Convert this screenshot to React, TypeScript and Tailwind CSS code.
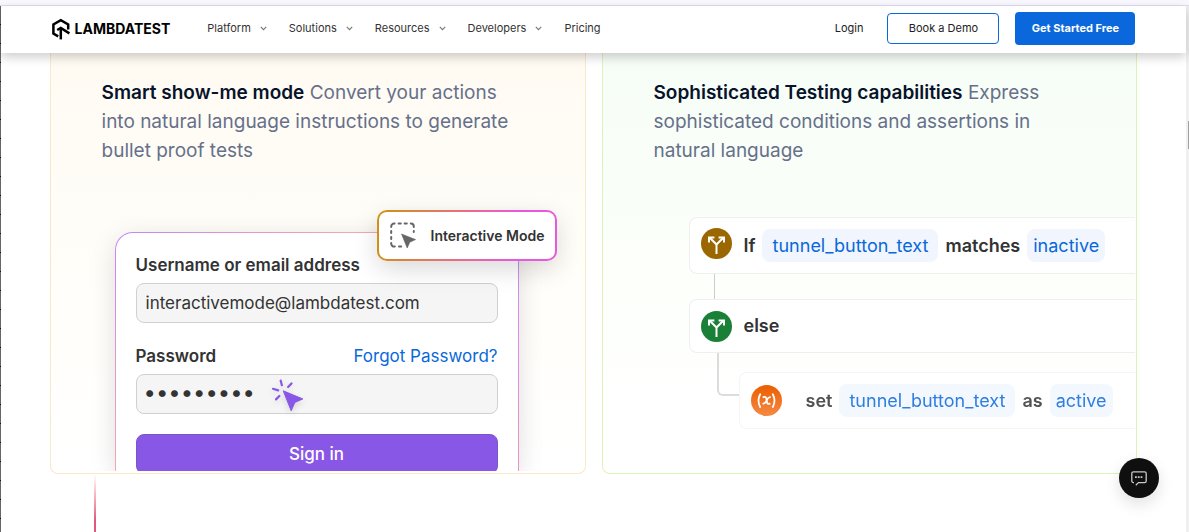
import type { ReactNode } from "react";

const menus = ["Platform", "Solutions", "Resources", "Developers"];

function Chevron() {
  return (
    <svg width="7" height="5" viewBox="0 0 7 5" fill="none" stroke="#777" strokeWidth="1.1" aria-hidden="true">
      <path d="M0.8 0.8 3.5 3.7 6.2 0.8" />
    </svg>
  );
}

function Logo() {
  return (
    <a href="#" className="flex items-center gap-1 text-black">
      <svg width="20" height="22" viewBox="0 0 20 22" fill="none" stroke="#000" strokeWidth="2.5" aria-hidden="true">
        <path d="M7.2 18.4 2.4 15.6V6.4L9.8 2.2l7.4 4.2v5" />
        <path d="M18.4 15.4 9.8 9.9 6.2 12" />
        <path d="M9.8 9.8V21.4" />
      </svg>
      <span className="text-sm leading-5 font-bold">LAMBDATEST</span>
    </a>
  );
}

function Header() {
  return (
    <header className="relative z-10 flex h-[47px] items-center bg-white pr-[51px] pb-0.5 pl-[50px] text-[11px] text-[#333] shadow-[0_4px_10px_rgba(0,0,0,0.2)]">
      <Logo />
      <nav className="ml-[37px] flex items-center gap-[22px]">
        {menus.map((m) => (
          <button key={m} type="button" className="flex items-center gap-[9px]">
            {m}
            <Chevron />
          </button>
        ))}
        <a href="#">Pricing</a>
      </nav>
      <div className="ml-auto flex items-center">
        <a href="#" className="mr-6 text-[#222]">Login</a>
        <button type="button" className="mr-4 h-[31px] w-28 rounded border border-[#0a68dc] text-[#222]">
          Book a Demo
        </button>
        <button type="button" className="h-[33px] w-[120px] rounded bg-[#0a68dc] font-bold text-white">
          Get Started Free
        </button>
      </div>
    </header>
  );
}

function Copy({ title, children }: { title: string; children: ReactNode }) {
  return (
    <p className="px-[51px] text-[19px] leading-[29px] text-[#66708a]">
      <strong className="font-semibold text-[#07132b]">{title}</strong> {children}
    </p>
  );
}

function SelectIcon() {
  return (
    <svg width="26" height="27" viewBox="0 0 26 27" fill="none" aria-hidden="true">
      <path
        stroke="#666"
        strokeWidth="2"
        strokeLinecap="round"
        d="M1.2 5V4.5A3 3 0 0 1 4.2 1.5H4.6M8.6 1.5h2.2M14.6 1.5h2.2M20.8 1.5a3 3 0 0 1 3 3V5M23.8 9v1M1.2 9v2M1.2 15v2M1.2 21v.6a3 3 0 0 0 3 3H4.8M9 24.6h2.2"
      />
      <path d="M11.5 12 25.6 17.6 19.8 20.2 17.2 26Z" fill="#666" stroke="#666" strokeWidth="0.6" strokeLinejoin="round" />
    </svg>
  );
}

function ClickIcon() {
  return (
    <svg width="36" height="36" viewBox="0 0 36 36" fill="none" className="absolute top-1 left-[134px] drop-shadow-md" aria-hidden="true">
      <path d="M13.2 12.8 32.8 20.9 24.8 24.5 21.2 32.8Z" fill="#8957e5" stroke="#8957e5" strokeLinejoin="round" />
      <g stroke="#8957e5" strokeWidth="2.2" strokeLinecap="round">
        <path d="M10.7 2.6 11.9 7.2M21.5 5.4 18.1 9M3 10.8 8.2 12.4M9.4 18 6 21.4" />
      </g>
    </svg>
  );
}

const field =
  "block h-10 w-full shrink-0 rounded-lg border border-[#d0d0d0] bg-[#f5f5f5] text-[#333]";

function LoginDemo() {
  return (
    <div className="relative mr-[66px] ml-16 rounded-t-[18px] bg-[linear-gradient(135deg,#c084fc_0%,#f5a8ae_38%,#c98afa_66%,#ea95c8_100%)] px-px pt-px shadow-[0_6px_26px_rgba(0,0,0,0.13)]">
      <form className="flex h-[238px] flex-col overflow-hidden rounded-t-[17px] bg-white px-5 pt-5 text-[17px] leading-6 text-[#333]" onSubmit={(e) => e.preventDefault()}>
        <label htmlFor="user" className="font-semibold">Username or email address</label>
        <input id="user" type="text" defaultValue="interactivemode@lambdatest.com" className={`${field} mt-1.5 px-[9px]`} />
        <div className="mt-[21px] flex justify-between">
          <label htmlFor="pass" className="font-semibold">Password</label>
          <a href="#" className="text-[#0a68dc]">Forgot Password?</a>
        </div>
        <div className="relative mt-1.5">
          <input id="pass" type="password" defaultValue="lambda123" className={`${field} px-[7px] pb-1 text-[22px]`} />
          <ClickIcon />
        </div>
        <button type="submit" className="mt-5 h-10 w-full shrink-0 rounded-lg border border-[#7d55c9] bg-[#8957e5] font-medium text-white">
          Sign in
        </button>
      </form>
      <div className="absolute -top-[22px] -right-[38px] rounded-[10px] bg-[linear-gradient(100deg,#d0901c_5%,#ea6d80_45%,#e858dc_75%)] p-0.5 shadow-[0_8px_24px_rgba(0,0,0,0.15)]">
        <div className="flex h-[47px] w-44 items-center justify-between rounded-lg bg-white pr-2.5 pl-[11px] text-sm font-semibold text-[#333]">
          <SelectIcon />
          Interactive Mode
        </div>
      </div>
    </div>
  );
}

function Branch({ className }: { className: string }) {
  return (
    <svg viewBox="0 0 31 31" className={`size-[31px] shrink-0 ${className}`} fill="none" stroke="#fff" strokeWidth="2" aria-hidden="true">
      <circle cx="15.5" cy="15.5" r="15.5" fill="currentColor" stroke="none" />
      <path d="M15.5 26V16.5L9 10M15.5 16.5 22 10" />
      <path d="M8 14.5V9.4h5.4M17.6 9.4H23v5.1" />
    </svg>
  );
}

function Variable() {
  return (
    <svg viewBox="0 0 31 31" className="size-[31px] shrink-0" fill="none" stroke="#fff" strokeLinecap="round" aria-hidden="true">
      <defs>
        <linearGradient id="orange" x1="0" y1="0" x2="0" y2="1">
          <stop stopColor="#ec5d00" />
          <stop offset="1" stopColor="#f58a44" />
        </linearGradient>
      </defs>
      <circle cx="15.5" cy="15.5" r="15.5" fill="url(#orange)" stroke="none" />
      <path strokeWidth="1.8" d="M9.2 9.2Q5.8 15.5 9.2 22M21.8 9.2Q25.2 15.5 21.8 22" />
      <path strokeWidth="1.8" d="M12.4 12.2c2.6-.9 3 .7 3.3 3.3s.9 4 3 3.2M19 12.2c-2 .1-2.8 2.2-3.4 3.3s-1.4 3-3.4 3.2" />
    </svg>
  );
}

function Pill({ wide, children }: { wide?: boolean; children: ReactNode }) {
  return (
    <span
      className={`rounded-lg bg-[#f1f6fe] text-center leading-[33px] font-normal text-[#0a68dc] ${wide ? "w-44" : "px-1.5"}`}
    >
      {children}
    </span>
  );
}

const row = "flex items-center rounded-l-lg border border-r-0 border-[#efefef] bg-white pl-[11px] font-semibold text-[#333]";

function ConditionDemo() {
  return (
    <div className="mt-[52px] mr-px pl-[86px] text-lg">
      <div className={`${row} h-[57px] gap-3`}>
        <Branch className="text-[#9a6700] -mt-1" />
        <div className="flex items-center gap-[7px]">
          If <Pill wide>tunnel_button_text</Pill> matches <Pill>inactive</Pill>
        </div>
      </div>
      <div className="ml-[25px] h-[25px] w-px bg-[#ccc]" />
      <div className={`${row} h-[54px] gap-3`}>
        <Branch className="text-[#1a7f37]" />
        else
      </div>
      <div className="flex pl-7">
        <div className="h-[43px] w-[22px] shrink-0 rounded-bl-md border-b-2 border-l-2 border-[#dcdcdc]" />
        <div className={`${row} mt-[19px] h-[57px] grow gap-6 border-[#f5f5f5]`}>
          <Variable />
          <div className="flex items-center gap-[7px] opacity-85">
            set <Pill wide>tunnel_button_text</Pill> as <Pill>active</Pill>
          </div>
        </div>
      </div>
    </div>
  );
}

export default function App() {
  return (
    <div className="flex min-h-screen flex-col bg-white font-['Inter',sans-serif]">
      <div className="h-1.5 border-b border-[#dfdcf0] bg-[#f9f8ff]" />
      <div className="flex grow">
        <div className="w-px bg-[repeating-linear-gradient(#666_0_18px,#111_18px_19px)]" />
        <div className="min-w-0 grow">
          <Header />
          <main>
            <section className="mx-[49px] grid grid-cols-2 gap-4">
              <article className="h-[421px] overflow-hidden rounded-b-lg border border-t-0 border-[#fbe8c6] bg-[linear-gradient(#fffbf3,#fffefa_60%,#fff)] pt-[25px] pb-0.5">
                <Copy title="Smart show-me mode">
                  Convert your actions into natural language instructions to generate bullet proof tests
                </Copy>
                <div className="mt-[25px] overflow-hidden pt-[42px]">
                  <LoginDemo />
                </div>
              </article>
              <article className="h-[421px] overflow-hidden rounded-b-lg border border-t-0 border-[#def3b8] bg-[linear-gradient(#f6fdf6,#fcfffa_50%,#fff_85%)] pt-[25px]">
                <Copy title="Sophisticated Testing capabilities">
                  Express sophisticated conditions and assertions in natural language
                </Copy>
                <ConditionDemo />
              </article>
            </section>
            <div className="ml-[93px] h-[58px] w-0.5 bg-linear-to-b from-white to-[#e0597c] to-80%" />
          </main>
        </div>
        <div className="w-[3px] bg-[#f0f0f0] pt-[115px] pl-0.5">
          <div className="h-7 bg-[#a0a0a0]" />
        </div>
      </div>
      <button type="button" aria-label="Open chat" className="fixed right-[30px] bottom-[34px] z-20 flex size-10 items-center justify-center rounded-full bg-[#0f0f0f] shadow-[0_6px_16px_rgba(0,0,0,0.12)]">
        <svg width="16" height="15" viewBox="0 0 16 15" fill="none" stroke="#c8c8c8" strokeWidth="1.3" strokeLinejoin="round" aria-hidden="true">
          <path d="M3 11.6H2.4A1.6 1.6 0 0 1 .8 10V2.4A1.6 1.6 0 0 1 2.4.8h11.2a1.6 1.6 0 0 1 1.6 1.6V10a1.6 1.6 0 0 1-1.6 1.6H7.4L4.8 14.2" />
          <path strokeDasharray="1.8 1" strokeWidth="1.8" d="M4 6.2h8" />
        </svg>
      </button>
    </div>
  );
}
